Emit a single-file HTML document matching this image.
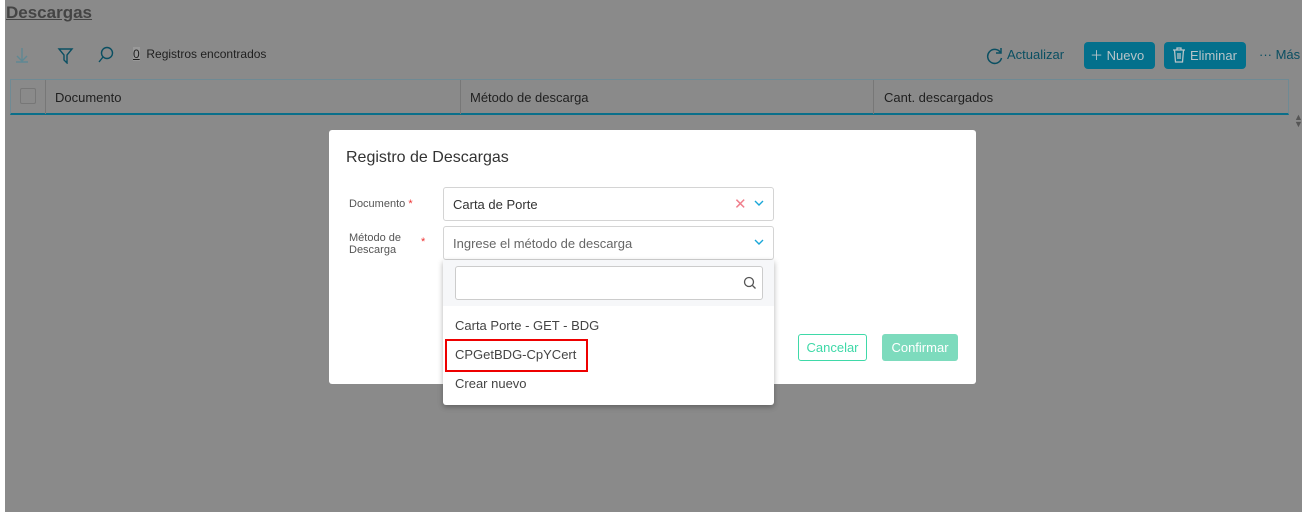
<!DOCTYPE html>
<html><head><meta charset="utf-8"><style>
*{box-sizing:border-box;margin:0;padding:0}
body{width:1302px;height:518px;background:#fff;font-family:"Liberation Sans",sans-serif;position:relative;overflow:hidden}
.bg{position:absolute;left:5px;top:0;width:1297px;height:512px;background:#8a8a8a}
.a{position:absolute}
.t{color:#1f1f1f;font-size:13px}
</style></head><body>
<div class="bg">
 <div class="a" style="left:1px;top:3px;font-size:17px;font-weight:bold;color:#444;text-decoration:underline">Descargas</div>
 <svg class="a" style="left:10px;top:46px" width="110" height="18" fill="none" stroke-width="1.4">
  <path d="M7 2v12M2 10l5 5 5-5M1 16h12" stroke="#5f8893"/>
  <path d="M44 3h13l-5 6v8l-3-3V9z" stroke="#0a4f62"/>
  <circle cx="92" cy="7" r="5.5" stroke="#0a4f62"/><path d="M88 11l-4 5" stroke="#0a4f62"/>
 </svg>
 <div class="a t" style="left:128px;top:47px;font-size:12px"><span style="text-decoration:underline;background:#999">0</span>&nbsp; Registros encontrados</div>
 <svg class="a" style="left:981px;top:47px" width="18" height="18" fill="none" stroke="#0a4f62" stroke-width="1.5"><path d="M14.5 5.5A7 7 0 1 0 15.5 11"/><path d="M15 1v5h-5"/></svg>
 <div class="a" style="left:1002px;top:47px;font-size:13px;color:#0a4f62">Actualizar</div>
 <div class="a" style="left:1079px;top:42px;width:71px;height:27px;background:#03708c;border-radius:4px;color:#b8c4c8;font-size:13px;line-height:27px;padding-left:6px">＋ Nuevo</div>
 <div class="a" style="left:1159px;top:42px;width:82px;height:27px;background:#03708c;border-radius:4px;color:#b8c4c8;font-size:13px;line-height:27px;padding-left:26px">Eliminar</div>
 <svg class="a" style="left:1167px;top:47px" width="14" height="16" fill="none" stroke="#b8c4c8" stroke-width="1.3"><path d="M1 3h12M5 3V1h4v2M2.5 3l1 12h7l1-12M6 6v6M8 6v6"/></svg>
 <div class="a" style="left:1254px;top:47px;font-size:13px;color:#0a4f62">··· Más</div>
 <div class="a" style="left:5px;top:79px;width:1279px;height:36px;border:1px solid #6f8a94;border-bottom:2px solid #0a6f8a"></div>
 <div class="a" style="left:40px;top:80px;width:1px;height:34px;background:#777"></div>
 <div class="a" style="left:455px;top:80px;width:1px;height:34px;background:#777"></div>
 <div class="a" style="left:868px;top:80px;width:1px;height:34px;background:#777"></div>
 <div class="a" style="left:15px;top:88px;width:16px;height:16px;border:1px solid #777;border-radius:2px"></div>
 <div class="a t" style="left:50px;top:90px">Documento</div>
 <div class="a t" style="left:465px;top:90px">Método de descarga</div>
 <div class="a t" style="left:879px;top:90px">Cant. descargados</div>
 <div class="a" style="left:1289px;top:114px;font-size:9px;color:#555;line-height:7px">▲<br>▼</div>
</div>
<div class="a" style="left:329px;top:130px;width:647px;height:254px;background:#fff;border-radius:3px">
 <div class="a" style="left:17px;top:19px;font-size:16px;color:#333">Registro de Descargas</div>
 <div class="a" style="left:20px;top:68px;font-size:11px;color:#555">Documento <span style="color:#e33">*</span></div>
 <div class="a" style="left:20px;top:102px;font-size:11px;color:#555;line-height:12px">Método de<br>Descarga</div>
 <div class="a" style="left:92px;top:106px;font-size:11px;color:#e33">*</div>
 <div class="a" style="left:114px;top:57px;width:331px;height:34px;border:1px solid #d4d4d4;border-radius:3px;font-size:13px;color:#333;padding:9px 0 0 9px">Carta de Porte</div>
 <div class="a" style="left:405px;top:65px;color:#f07f8c;font-size:15px">✕</div>
 <svg class="a" style="left:425px;top:70px" width="10" height="7" fill="none" stroke="#1aa7d8" stroke-width="1.4"><path d="M1 1l4 4 4-4"/></svg>
 <div class="a" style="left:114px;top:96px;width:331px;height:34px;border:1px solid #d4d4d4;border-radius:3px;font-size:13px;color:#666;padding:9px 0 0 9px">Ingrese el método de descarga</div>
 <svg class="a" style="left:425px;top:109px" width="10" height="7" fill="none" stroke="#1aa7d8" stroke-width="1.4"><path d="M1 1l4 4 4-4"/></svg>
 <div class="a" style="left:469px;top:204px;width:69px;height:27px;border:1px solid #3fd9a8;border-radius:3px;color:#3fd9a8;font-size:13px;line-height:25px;text-align:center">Cancelar</div>
 <div class="a" style="left:553px;top:204px;width:76px;height:27px;background:#7ddbbd;border-radius:3px;color:#fff;font-size:13px;line-height:27px;text-align:center">Confirmar</div>
</div>
<div class="a" style="left:443px;top:260px;width:331px;height:145px;background:#fff;border-radius:0 0 3px 3px;box-shadow:0 2px 6px rgba(0,0,0,.3)">
 <div class="a" style="left:0;top:0;width:331px;height:46px;background:#f6f7f9"></div>
 <div class="a" style="left:12px;top:6px;width:308px;height:34px;border:1px solid #ccc;border-radius:3px;background:#fff"></div>
 <svg class="a" style="left:300px;top:16px" width="14" height="14" fill="none" stroke="#555" stroke-width="1.3"><circle cx="6" cy="6" r="4.5"/><path d="M9.5 9.5l3 3"/></svg>
 <div class="a" style="left:12px;top:58px;font-size:13px;color:#444">Carta Porte - GET - BDG</div>
 <div class="a" style="left:2px;top:79px;width:143px;height:33px;border:2px solid #e00"></div>
 <div class="a" style="left:12px;top:87px;font-size:13px;color:#444">CPGetBDG-CpYCert</div>
 <div class="a" style="left:12px;top:116px;font-size:13px;color:#444">Crear nuevo</div>
</div>
</body></html>
